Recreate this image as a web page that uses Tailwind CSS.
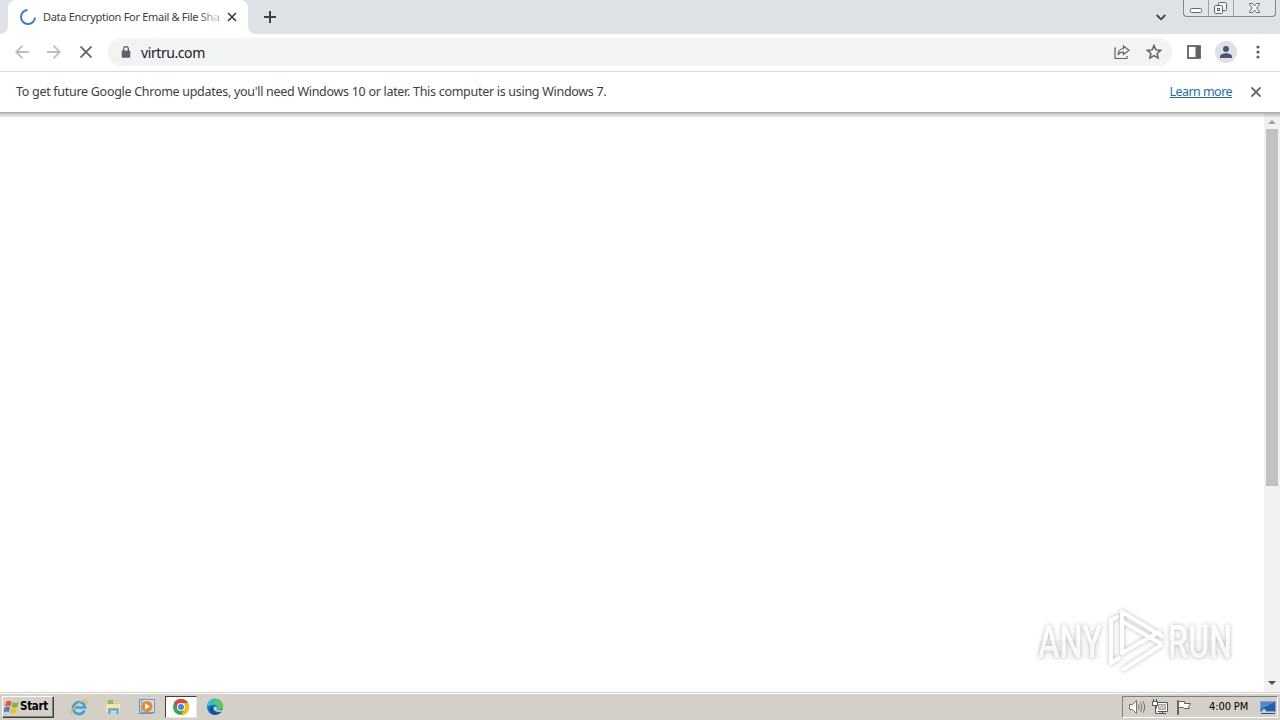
<!DOCTYPE html>
<html lang="en">
<head>
    <meta charset="UTF-8">
    <meta name="viewport" content="width=device-width, initial-scale=1.0">
    <title>Data Encryption For Email &amp; File Sharing</title>
    <script src="https://cdn.jsdelivr.net/npm/@tailwindcss/browser@4"></script>
</head>
<body class="w-[1280px] h-[720px] overflow-hidden flex flex-col bg-white font-['Noto_Sans','Open_Sans',sans-serif] text-[#3c4043]">
    <!-- Tab strip -->
    <header class="h-[34px] shrink-0 flex bg-[#dee1e6]">
        <div class="w-2 flex items-end bg-white">
            <div class="w-2 h-full bg-[#dee1e6] rounded-br-lg"></div>
        </div>
        <div class="w-60 flex items-center pl-3 bg-[#dee1e6]">
            <div class="w-60 h-full -ml-3 pl-3 flex items-center bg-white rounded-t-lg">
                <svg class="w-4 h-4 shrink-0" viewBox="0 0 16 16" fill="none" stroke="#3b78d0" stroke-width="2"><path d="M7.5 1A7 7 0 1 0 15 8.5"/></svg>
                <div class="relative ml-[7px] w-[175px] whitespace-nowrap text-[11px] leading-4 tracking-[-0.3px] text-[#3c4043]">Data Encryption For Email &amp; File Sha
                    <div class="absolute right-0 top-0 w-5 h-4 bg-linear-to-r from-white/0 to-white/80"></div>
                </div>
                <svg class="w-2.5 h-2.5 ml-[9px]" viewBox="0 0 10 10" stroke="#3c4043" stroke-width="1.7"><path d="M1 1l8 8M9 1l-8 8"/></svg>
            </div>
        </div>
        <div class="w-2 bg-white"><div class="w-2 h-full bg-[#dee1e6] rounded-bl-lg"></div></div>
        <svg class="w-3 h-3 mt-[11px] ml-2" viewBox="0 0 12 12" stroke="#3c4043" stroke-width="2"><path d="M6 0v12M0 6h12"/></svg>
        <svg class="w-[10px] h-[7px] mt-[14px] ml-auto" viewBox="0 0 10 7" fill="none" stroke="#3c4043" stroke-width="1.8"><path d="M.7 1L5 5.3 9.3 1"/></svg>
        <div class="ml-[17px] mr-[4px] w-[93px] h-[17px] flex border border-t-0 border-[#81858c] rounded-b-[4px] bg-[#e2e5ea]">
            <div class="w-[25px] border-r border-[#a0a4aa]">
                <svg class="w-full h-4" viewBox="0 0 24 16"><rect x="6.5" y="8.5" width="11" height="4" rx="1" fill="#fff" stroke="#62666d"/></svg>
            </div>
            <div class="w-[25px] border-r border-[#a0a4aa]">
                <svg class="w-full h-4" viewBox="0 0 24 16" fill="#f4f5f7" stroke="#62666d"><rect x="9.5" y="2.5" width="8" height="8" rx="1"/><rect x="5.5" y="5.5" width="8" height="8" rx="1"/><rect x="8.5" y="8.5" width="2" height="2"/></svg>
            </div>
            <svg class="w-[41px] h-4" viewBox="0 0 41 16" fill="#fff" stroke="#62666d"><path d="M15.5 3.5h3l2 2.5 2-2.500h3v1L22.500 8l3 3.500v1h-3l-2-2.500-2 2.500h-3v-1l3-3.500-3-3.500z"/></svg>
        </div>
    </header>

    <!-- Toolbar -->
    <nav class="h-[38px] shrink-0 flex items-center pb-px border-b border-[#dadce0]">
        <svg class="w-[14px] h-[14px] ml-[15px]" viewBox="0 0 14 14" fill="none" stroke="#bcbec1" stroke-width="1.8"><path d="M14 7H1.500M7.500 .7L1.200 7l6.300 6.300"/></svg>
        <svg class="w-[14px] h-[14px] ml-[18px]" viewBox="0 0 14 14" fill="none" stroke="#bcbec1" stroke-width="1.8"><path d="M0 7h12.500M6.500 .7L12.800 7l-6.300 6.300"/></svg>
        <svg class="w-3 h-3 ml-[19px]" viewBox="0 0 12 12" stroke="#5f6368" stroke-width="1.8"><path d="M.5 .5l11 11M11.500 .5l-11 11"/></svg>
        <div class="ml-4 w-[1064px] h-7 rounded-full bg-[#f1f3f4] flex items-center pl-[13px]">
            <svg class="w-[10px] h-3" viewBox="0 0 10 12"><path d="M2.600 5V3a2.400 2.400 0 0 1 4.800 0v2" fill="none" stroke="#5f6368" stroke-width="1.300"/><rect x=".7" y="4.500" width="8.600" height="7.200" rx="1" fill="#5f6368"/></svg>
            <span class="ml-[10px] pt-px text-[14px] leading-5 tracking-[-0.42px] text-[#202124]">virtru.com</span>
            <svg class="w-4 h-4 ml-auto" viewBox="0 0 16 16" fill="none" stroke="#5f6368" stroke-width="1.200"><path d="M2 4H1v10.500h12V12M9.500 2L15 6.300 9.500 10.500V8.200C7 8.200 5 9 4 11c.2-3.500 2-6 5.500-6.500z"/></svg>
            <svg class="w-4 h-4 ml-4 mr-[10px]" viewBox="0 0 16 16" fill="none" stroke="#5f6368" stroke-width="1.500"><path d="M8 1.600l1.900 4.300 4.700.5-3.500 3.100 1 4.600L8 11.700l-4.100 2.400 1-4.600L1.400 6.400l4.700-.5z"/></svg>
        </div>
        <svg class="w-[14px] h-[14px] ml-[15px]" viewBox="0 0 14 14"><rect x="1" y="1" width="12" height="12" fill="none" stroke="#5f6368" stroke-width="1.800"/><path d="M8.500 1H13v12H8.500z" fill="#5f6368"/></svg>
        <svg class="w-[22px] h-[22px] ml-[14px]" viewBox="0 0 22 22"><circle cx="11" cy="11" r="11" fill="#dee1e6"/><circle cx="11" cy="8" r="3" fill="#4b5470"/><path d="M5 17v-1.500c0-2 3.500-3.200 6-3.200s6 1.200 6 3.200V17z" fill="#4b5470"/></svg>
        <svg class="w-1 h-[14px] ml-[19px]" viewBox="0 0 4 14" fill="#5f6368"><circle cx="2" cy="2" r="1.600"/><circle cx="2" cy="7" r="1.600"/><circle cx="2" cy="12" r="1.600"/></svg>
    </nav>

    <!-- Update notice -->
    <section class="h-[40px] shrink-0 flex items-center pl-4 text-[12.5px] leading-5 whitespace-nowrap">
        <p class="pb-px tracking-[-0.29px]">To get future Google Chrome updates, you'll need Windows 10 or later. This computer is using Windows 7.</p>
        <a href="#" class="ml-auto pb-px text-[#1a6bb8] underline tracking-[-0.55px]">Learn more</a>
        <svg class="w-[10px] h-[10px] ml-[19px] mr-[19px]" viewBox="0 0 10 10" stroke="#5f6368" stroke-width="1.900"><path d="M.5 .5l9 9M9.500 .5l-9 9"/></svg>
    </section>

    <!-- Page -->
    <main class="relative flex-1 min-h-0 flex border-t border-[#a9a9a9]">
        <div class="absolute inset-x-0 top-0 h-[5px] bg-linear-to-b from-black/25 to-transparent"></div>
        <svg class="absolute left-[1030px] top-[490px] w-[212px] h-[76px] drop-shadow-[0_0_2px_rgba(0,0,0,0.28)]" viewBox="1030 604 212 76" font-family="Roboto, sans-serif" font-size="47" font-weight="500" fill="#fff">
            <text x="1038" y="659" textLength="64" lengthAdjust="spacingAndGlyphs">ANY</text>
            <text x="1168" y="659" textLength="64" lengthAdjust="spacingAndGlyphs">RUN</text>
            <g fill="none" stroke="#fff" stroke-width="4" stroke-linejoin="round" stroke-linecap="round"><path d="M1122 654V613l40 24M1123 623l37 21M1122 654l37-21M1124 670l37-24"/><path d="M1117 618l-6 3v43l8-5"/></g>
            <path d="M1039 641h62v19h-62zM1169 641h62v19h-62z" fill="#000" opacity=".025"/>
        </svg>
        <div class="ml-auto w-4 flex flex-col items-center bg-[#f1f1f1]">
            <svg class="w-2 h-4 shrink-0" viewBox="0 0 8 16" fill="#a3a3a3"><path d="M0 11l4-4 4 4z"/></svg>
            <div class="w-3 h-[357px] bg-[#c1c1c1]"></div>
            <svg class="w-2 h-4 mt-auto mb-px shrink-0" viewBox="0 0 8 16" fill="#505050"><path d="M0 6l4 4 4-4z"/></svg>
        </div>
    </main>

    <!-- Taskbar -->
    <footer class="h-7 shrink-0 flex items-center pt-px pl-[2px] bg-[#d4d0c8] border-t border-[#d4d0c8] shadow-[inset_0_1px_0_#fff] text-black">
        <button class="w-[52px] h-[22px] flex items-center pl-px border border-t-white border-l-white border-b-[#404040] border-r-[#404040] shadow-[inset_-1px_-1px_0_#808080] font-['DejaVu_Sans_Condensed','DejaVu_Sans',sans-serif] font-bold text-[11.5px] tracking-[-0.3px]">
            <svg class="w-4 h-4 shrink-0" viewBox="1 1 15 14"><path d="M3 3c2-1.300 3.500-1 5 0L7 7.500c-1.500-1-3-1-5 0z" fill="#e8572b"/><path d="M9 3.500c2 1 3.500 1 6 0L13.500 8c-2 1-3.500.8-5.500 0z" fill="#79b741"/><path d="M1.700 8.500c2-1 3.500-1 5 0L5.500 13c-1.500-1-3-1-5 0z" fill="#3e82ca"/><path d="M7.700 9c2 1 3.500 1 5.500 0L12 13.500c-2 1-3.500.8-5.500 0z" fill="#f6bd28"/></svg>
            <span>Start</span>
        </button>
        <svg class="w-[18px] h-[18px] ml-4" viewBox="0 0 18 18" fill="none"><path d="M14.500 12.500A6 6 0 1 1 15 9.500H5" stroke="#36a5de" stroke-width="2.700"/><path d="M2 16C-.5 13 8 4 15 2c3-.7 1.500 3 .5 4" stroke="#e8b83a" stroke-width="1.300"/></svg>
        <svg class="w-[18px] h-[18px] ml-4" viewBox="0 0 18 18"><path d="M2 3h5l1 2h7v9H2z" fill="#e9ca67"/><path d="M4 2h5v4H4z" fill="#7bbd72"/><path d="M2 6h14v8H2z" fill="#f7e5a0"/><path d="M4 16v-5q0-1 1-1h9q1 0 1 1v5h-3v-3H7v3z" fill="#69b5df"/></svg>
        <svg class="w-[18px] h-[18px] ml-4" viewBox="0 0 18 18"><rect x="1.500" y="1.500" width="13" height="14" fill="#b8d5ed" stroke="#6696bd"/><rect x="4" y="1.500" width="12.500" height="13" fill="#c9e0f3" stroke="#6b9dc9"/><circle cx="9" cy="8.500" r="5.500" fill="#f3861c"/><path d="M7 5.200v6.600l5-3.300z" fill="#fff"/></svg>
        <div class="w-8 h-[22px] ml-[9px] flex items-center justify-center bg-white border border-t-[#404040] border-l-[#404040] border-b-[#e8e6e1] border-r-[#e8e6e1]">
            <svg class="w-4 h-4" viewBox="0 0 16 16"><circle cx="8" cy="8" r="8" fill="#34a853"/><path d="M1.070 4A8 8 0 0 1 14.930 4L8 8z" fill="#ea4335"/><path d="M14.930 4A8 8 0 0 1 8 16l3.500-6L8 4z" fill="#fbbc04"/><path d="M1.070 4l3.500 6L8 4z" fill="#ea4335"/><circle cx="8" cy="8" r="4" fill="#fff"/><circle cx="8" cy="8" r="3" fill="#4285f4"/></svg>
        </div>
        <svg class="w-[18px] h-[18px] ml-[9px]" viewBox="0 0 18 18"><circle cx="9" cy="9" r="8" fill="#1373bd"/><path d="M1 9a8 8 0 0 1 16-1c0 3-3 4-6 3 2-4-4-6-10-2z" fill="#35bcd2"/><path d="M10 1c5 1 8 5 7 8s-4 3-6 2c2-3 0-5-4-6z" fill="#5bc960"/><path d="M7 8c-2 4 2 8 8 6-3 4-11 3-11-2 0-2 1-4 3-4z" fill="#124d93"/><path d="M10.500 11c2 2 5 1.500 6 .5L16 13.500c-3 1-7 0-8-2-1-1 0-3 1-3 2 0 2.500 1 1.500 2.500z" fill="#d4d0c8"/></svg>
        <div class="ml-auto mr-[2px] w-[156px] h-[22px] flex items-center pl-[5px] border border-t-[#808080] border-l-[#808080] border-b-white border-r-white">
            <svg class="w-[18px] h-4" viewBox="0 0 18 16" fill="none" stroke="#77746e"><path d="M1.500 5.500h3l4-4v13l-4-4h-3z" fill="#fff"/><path d="M10.500 5.500q1.500 2.500 0 5M12.500 3.500q3 4.500 0 9M14.500 2q4.500 6 0 12"/></svg>
            <svg class="w-4 h-4 ml-[6px]" viewBox="0 0 16 16" fill="#fff" stroke="#55534f"><path d="M4.500 3.500h11v9h-11z"/><path d="M6.500 5.500h7v5h-7z" fill="#c9c6bf" stroke="#aaa79f"/><path d="M7 14.500h7M10.500 12.500v2M.5 2.500h5v4h-5zM1.500 0v2M4.500 0v2M3.500 6.500v8h3"/></svg>
            <svg class="w-4 h-4 ml-2" viewBox="0 0 16 16" fill="#fff" stroke="#66635e"><path d="M1.500 1.500h1v14h-1z"/><path d="M2.500 2.500h6v2h6l-2 3 1 2H8.500l-1-1h-5z"/></svg>
            <span class="ml-[17px] w-[42px] pt-px whitespace-nowrap font-['DejaVu_Sans_Condensed','DejaVu_Sans',sans-serif] text-[11px] tracking-[-0.1px]">4:00 PM</span>
            <svg class="w-4 h-4 ml-[9px]" viewBox="0 0 16 16"><path d="M.5 2.500h15v10H.5z" fill="#245cac" stroke="#7aa3d0"/><path d="M1 3h14L1 10z" fill="#5089cc"/><path d="M1 14.500h14" stroke="#334e79"/><circle cx="4" cy="12" r="2" fill="#b6d7ef"/></svg>
        </div>
    </footer>
</body>
</html>
